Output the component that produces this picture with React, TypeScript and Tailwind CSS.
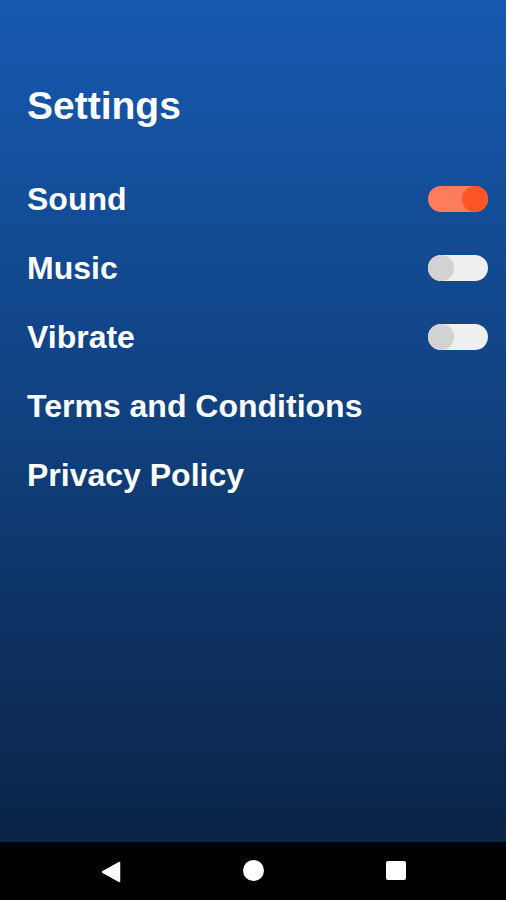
import React from "react";

function Toggle({ on }: { on: boolean }) {
  return on ? (
    <div className="flex h-[26px] w-[60px] items-center justify-end rounded-full bg-[#fd7c5c]">
      <div className="h-[26px] w-[26px] rounded-full bg-[#fe5427]" />
    </div>
  ) : (
    <div className="flex h-[26px] w-[60px] items-center justify-start rounded-full bg-[#efefef]">
      <div className="h-[26px] w-[26px] rounded-full bg-[#d2d2d2]" />
    </div>
  );
}

const rows: { label: string; toggle?: boolean }[] = [
  { label: "Sound", toggle: true },
  { label: "Music", toggle: false },
  { label: "Vibrate", toggle: false },
  { label: "Terms and Conditions" },
  { label: "Privacy Policy" },
];

export default function App() {
  return (
    <div
      className="flex h-[900px] w-[506px] flex-col overflow-hidden"
      style={{ fontFamily: '"Liberation Sans", Arial, sans-serif' }}
    >
      <div className="flex-1 bg-gradient-to-b from-[#1659b0] via-[#10417f] to-[#0a2346] pl-[27px] pr-[18px] pt-[84px]">
        <h1 className="text-[39px] font-bold leading-[44px] text-white">Settings</h1>
        <div className="mt-[36px] flex flex-col">
          {rows.map((r) => (
            <div key={r.label} className="flex h-[69px] items-center justify-between">
              <span className="text-[32px] font-bold leading-[36px] text-white">{r.label}</span>
              {r.toggle !== undefined && <Toggle on={r.toggle} />}
            </div>
          ))}
        </div>
      </div>
      <div className="relative flex h-[58px] items-center bg-black">
        <svg className="absolute left-[101px] top-[19px]" width="20" height="22" viewBox="0 0 20 22">
          <path d="M18.5 1.5 L1.5 11 L18.5 20.5 Z" fill="white" stroke="white" strokeWidth="1.5" strokeLinejoin="round" />
        </svg>
        <div className="absolute left-[243px] top-[18px] h-[21px] w-[21px] rounded-full bg-white" />
        <div className="absolute left-[386px] top-[19px] h-[19px] w-[20px] rounded-[2px] bg-white" />
      </div>
    </div>
  );
}
